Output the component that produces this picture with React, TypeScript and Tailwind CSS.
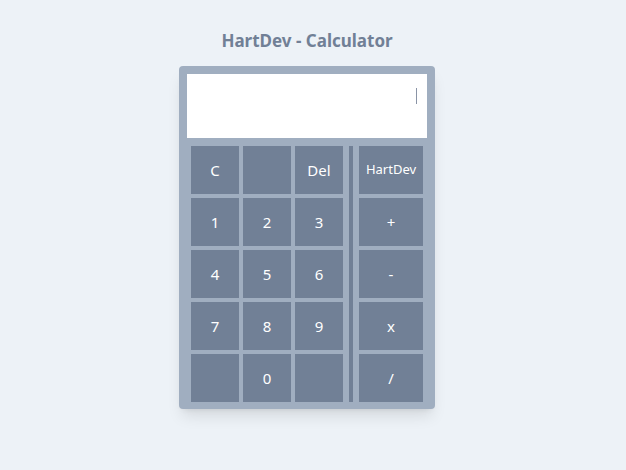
// HartDev calculator mock-up

const rows: string[][] = [
  ['C', '', 'Del'],
  ['1', '2', '3'],
  ['4', '5', '6'],
  ['7', '8', '9'],
  ['', '0', ''],
];

const ops = ['HartDev', '+', '-', 'x', '/'];

function Key({ label, wide }: { label: string; wide?: boolean }) {
  return (
    <button
      className={`${wide ? 'w-16' : 'w-12'} h-12 bg-[#718096] text-white flex items-center justify-center ${
        label === 'HartDev' ? 'text-[13px]' : 'text-[15px]'
      }`}
    >
      {label}
    </button>
  );
}

export default function App() {
  return (
    <div
      className="min-h-[470px] bg-[#edf2f7] flex flex-col items-center pt-[29px] pr-3"
      style={{ fontFamily: '"Noto Sans", "Open Sans", sans-serif' }}
    >
      <h1 className="text-[17px] leading-6 font-bold text-[#718096]">HartDev - Calculator</h1>

      <div className="mt-[13px] w-64 bg-[#a0aec0] rounded p-2 pb-[7px] shadow-lg">
        {/* Display */}
        <div className="h-16 bg-white flex justify-end items-start pt-[14px] pr-[10px]">
          <span className="w-px h-4 bg-[#8a94a6]" />
        </div>

        {/* Keypad */}
        <div className="mt-2 px-1 flex">
          <div className="flex flex-col gap-1">
            {rows.map((row, i) => (
              <div key={i} className="flex gap-1">
                {row.map((k, j) => (
                  <Key key={j} label={k} />
                ))}
              </div>
            ))}
          </div>

          <div className="w-1 mx-[6px] bg-[#718096]" />

          <div className="flex flex-col gap-1">
            {ops.map((k) => (
              <Key key={k} label={k} wide />
            ))}
          </div>
        </div>
      </div>
    </div>
  );
}
